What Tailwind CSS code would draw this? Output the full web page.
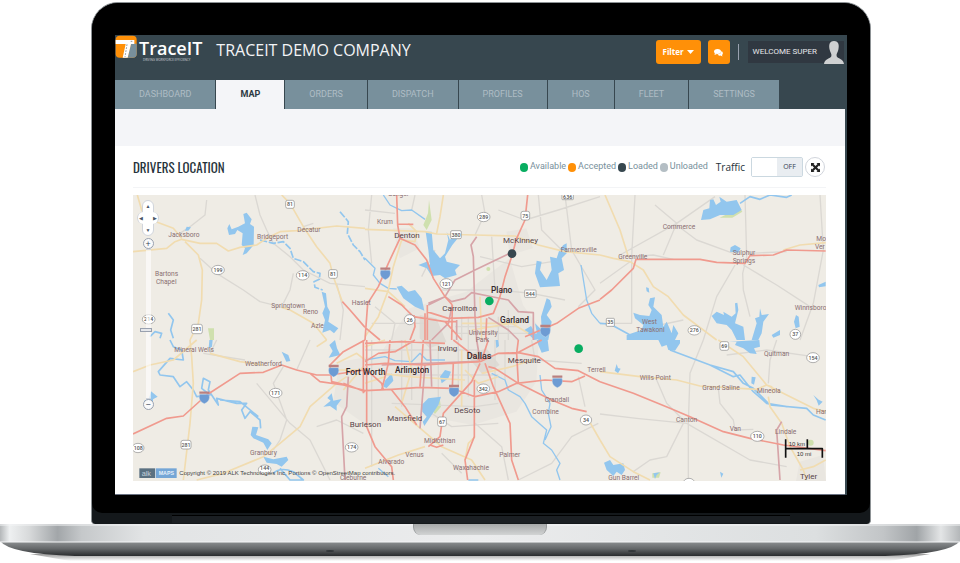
<!DOCTYPE html>
<html lang="en">
<head>
  <meta charset="UTF-8" />
  <meta name="viewport" content="width=device-width, initial-scale=1.0" />
  <title>TraceIT - Drivers Location</title>
  <script src="https://cdn.jsdelivr.net/npm/@tailwindcss/browser@4"></script>
</head>
<body class="bg-white overflow-x-hidden font-['Open_Sans',sans-serif]">

  <!-- Laptop lid -->
  <div class="pt-[2px] pl-[91px] pr-[89px]">
    <div class="bg-[#14181b] border border-b-0 border-[#8d9295] rounded-t-[27px] rounded-b-[4px]">
      <div class="bg-black rounded-t-[26px] rounded-b-[10px] pt-8 pl-[23px] pr-[23px] pb-[18px]">

        <!-- Screen -->
        <div class="bg-[#37474f]">
          <header class="flex items-start justify-between pb-[14px]">
            <div class="flex items-start">
              <a href="#" class="flex items-start text-white" aria-label="TraceIT home">
                <svg class="w-[22px] h-[23px]" viewBox="0 0 66 69">
                  <rect x="2" y="2" width="63" height="66" rx="12" fill="#ff9008" />
                  <path d="M48 26H65V56Q65 68 53 68H38z" fill="#78909c" />
                  <path d="M2 15H58V27H48L38 68H23L32 27H2z" fill="#fff" />
                  <path d="M36 28 L30 66 M47 19 h8" stroke="#59666d" stroke-width="2" stroke-dasharray="5 4" />
                </svg>
                <span class="flex flex-col ml-[2px]">
                  <span class="text-[18px] leading-[20px] pt-[3px] font-semibold">TraceIT</span>
                  <span class="text-[3px] leading-[4px] pl-1 text-gray-300">DRIVING WORKFORCE EFFICIENCY</span>
                </span>
              </a>
              <h1 class="ml-[14px] text-[16px] leading-[31px] text-gray-100 whitespace-nowrap">TRACEIT DEMO COMPANY</h1>
            </div>
            <div class="flex items-center mt-[5px] pr-[3px] h-6">
              <button class="flex items-center gap-[3px] h-6 px-[7px] rounded-[3px] bg-[#ff9008] text-white text-[8px] font-bold">Filter
                <svg class="w-[7px] h-1" viewBox="0 0 14 8"><path d="M0 0h14L7 8z" fill="#fff" /></svg>
              </button>
              <button class="flex items-center justify-center w-[22px] h-6 ml-[7px] rounded-[3px] bg-[#ff9008]" aria-label="Messages">
                <svg class="w-[9px] h-[9px]" viewBox="0 0 18 16" fill="#fff"><ellipse cx="7" cy="6" rx="7" ry="5" /><path d="M2 9l-1 4 5-2z" /><path d="M15 5q5 4 1 8l1 3-4-2q-4 1-6-2 7-1 8-7z" /></svg>
              </button>
              <span class="w-px h-4 ml-2 bg-gray-400"></span>
              <div class="flex items-center h-[22px] ml-[9px] pl-[5px] bg-[#303841] text-gray-200 text-[8px] font-['Roboto',sans-serif] whitespace-nowrap">WELCOME SUPER
                <svg class="w-5 h-[23px] ml-[7px]" viewBox="0 0 60 69" fill="#cfd1d2"><path d="M30 0C15 0 14 14 17 26C19 35 24 38 22 46C20 54 2 52 0 69H60C58 52 40 54 38 46C36 38 41 35 43 26C46 14 45 0 30 0z" /></svg>
              </div>
            </div>
          </header>

          <!-- Tabs -->
          <nav class="flex gap-px text-[9px] leading-[13px] text-[#afbdc5] font-['Roboto',sans-serif]">
            <a href="#" class="bg-[#78909c] px-6 py-2">DASHBOARD</a>
            <a href="#" class="bg-[#f4f5f8] px-6 py-2 text-[#2c3942] font-bold">MAP</a>
            <a href="#" class="bg-[#78909c] px-6 py-2">ORDERS</a>
            <a href="#" class="bg-[#78909c] px-6 py-2">DISPATCH</a>
            <a href="#" class="bg-[#78909c] px-6 py-2">PROFILES</a>
            <a href="#" class="bg-[#78909c] px-6 py-2">HOS</a>
            <a href="#" class="bg-[#78909c] px-6 py-2">FLEET</a>
            <a href="#" class="bg-[#78909c] px-6 py-2">SETTINGS</a>
          </nav>

          <main class="mr-[2px] bg-white border-b border-gray-500">
            <div class="h-[37px] bg-[#f4f5f8]"></div>
            <div class="pl-[18px] pr-[19px] pb-[13px]">
              <div class="flex items-center justify-between pt-[11px] pb-[10px] border-b border-gray-100">
                <h2 class="text-[13px] leading-[20px] text-[#26323a] font-['Oswald','Roboto_Condensed','Liberation_Sans_Narrow',sans-serif]">DRIVERS LOCATION</h2>
                <div class="flex items-center text-[9px] text-[#78909c]">
                  <ul class="flex items-center gap-[2px] font-['Roboto',sans-serif]">
                    <li class="flex items-center gap-[2px]"><i class="w-2 h-[9px] rounded-full bg-[#08ad61]"></i>Available</li>
                    <li class="flex items-center gap-[2px]"><i class="w-2 h-[9px] rounded-full bg-[#ff9008]"></i>Accepted</li>
                    <li class="flex items-center gap-[2px]"><i class="w-2 h-[9px] rounded-full bg-[#37474f]"></i>Loaded</li>
                    <li class="flex items-center gap-[2px]"><i class="w-2 h-[9px] rounded-full bg-[#b4bec4]"></i>Unloaded</li>
                  </ul>
                  <label for="traffic" class="ml-2 text-[10px] text-[#26323a]">Traffic</label>
                  <label class="relative flex w-[52px] h-5 ml-[6px] border border-[#cbd8e0] rounded-[2px]">
                    <input type="checkbox" id="traffic" class="peer absolute inset-0 opacity-0" />
                    <span class="w-1/2 bg-white"></span>
                    <span class="flex w-1/2 items-center justify-center bg-[#e9edf1] text-[7px] text-gray-700">OFF</span>
                  </label>
                  <button class="flex items-center justify-center w-5 h-5 ml-[2px] mr-px rounded-full border border-gray-300" aria-label="Full screen">
                    <svg class="w-[9px] h-[9px]" viewBox="0 0 18 18" fill="#222"><path d="M0 0h7L5 2l4 4 4-4-2-2h7v7l-2-2-4 4 4 4 2-2v7h-7l2-2-4-4-4 4 2 2H0v-7l2 2 4-4-4-4-2 2z" /></svg>
                  </button>
                </div>
              </div>

              <!-- Map -->
              <div class="relative mt-[7px]">
                <svg class="block w-full" viewBox="0 0 2079 858" fill="none" stroke-linejoin="round" font-family="Roboto, sans-serif">
                  <rect width="2079" height="858" fill="#efece5" />
                  <!-- built up areas -->
                  <g fill="#e9e6e0">
                    <path d="M830 340L1000 290 1130 190 1170 330 1220 400 1210 560 1150 650 1020 690 860 660 700 690 600 620 620 500 740 480z" />
                    <path d="M780 100h60l20 60-60 30zM1120 110l60-10 20 60-70 20zM2000 800l70-20 9 78h-90z" />
                  </g>
                  <g fill="#dedad4"><path d="M860 360l50 10 30 70-50 20-30-30zM1000 480l60-20 40 50-50 30z" /></g>
                  <g fill="#cfe0ae">
                    <path d="M888 15l8 60-15 30-10-15 14-35z" /><path d="M225 400h18v35h-12z" /><path d="M1760 68l60-30 8 12-30 18z" />
                    <circle cx="1066" cy="222" r="6" /><circle cx="2033" cy="743" r="9" /><path d="M1558 835l25-3-5 16h-20z" /><path d="M900 650l20-40 4 25-18 22z" />
                  </g>

                  <!-- minor roads -->
                  <g stroke="#dbd8d3" stroke-width="4">
                    <path transform="translate(-9 -15)" d="M375 15L390 75 410 120 430 160 480 200 520 240 600 280 705 290M230 30L225 75 180 110 150 130M210 205L260 250 340 300 390 335 450 350M490 250L480 300 460 340M620 280L640 360 630 450M550 100L520 110" />
                    <path transform="translate(696 -15)" d="M20 15L10 120 20 220M0 60L90 70M150 15L140 60M350 15L360 70 330 135M520 15L530 120 600 190M400 60L480 90 580 60 705 20M600 15L620 180 690 300 640 350M230 300L400 300 500 310 600 330M290 380V450M310 380V450M400 380V450M430 360V450M270 410H460M270 430H500M30 350L90 400 80 450M345 200L470 230 560 215M20 400H180M210 180L170 260M380 140L390 300" />
                    <path transform="translate(1401 -15)" d="M105 15L95 200V400L20 400M60 195L230 100 345 20M165 45L230 100 190 195M230 105L290 150 400 190M435 15L440 200 428 250 430 300 450 380M405 225L350 320 310 450M430 225L530 285 630 350M660 15L670 180 640 340 600 450M0 280L90 215M90 200L160 195 220 208M250 390L180 405M450 190L560 185" />
                    <path transform="translate(-9 435)" d="M220 40L345 60M380 130L480 250 540 300 600 420M460 80L430 130 470 240 450 300 430 330M260 0L240 40M540 0L500 90M560 260L620 240 700 280" />
                    <path transform="translate(696 435)" d="M20 0V380M110 0V200M140 0V180M220 0V180M280 0V170M310 0V170M390 0V180M420 0V120M0 30H340M60 105H400M80 190L330 200 400 190M200 220L260 260 400 250M230 340L290 400M330 250L410 320 430 420M460 420L560 370 620 290 700 250M500 0L510 60 650 70M640 110L660 200" />
                    <path transform="translate(1401 435)" d="M310 0L270 100 265 250V420M0 222L110 235 260 250 450 360 560 380M170 120L200 190 255 245M250 250L200 350 150 360 100 395M355 145L360 190 400 240 405 270 460 268M530 0L510 60 505 130M380 45L500 30 640 50" />
                  </g>

                  <!-- water -->
                  <g fill="#92c6ee">
                    <path transform="translate(-9 -15)" d="M340 72L350 68 365 88 360 102 372 110 371 165 350 190 338 195 345 175 335 165 338 130 322 120 315 132 297 135 292 115 298 102 305 118 325 110 345 100zM165 122l5-12 13 2-8 10zM575 305L588 310 592 350 600 365 595 395 625 415 612 430 600 420 577 428 585 390 577 370 585 350z" />
                    <path transform="translate(696 -15)" d="M182 125H200L205 180 225 205 240 190 250 150 245 125 255 150 272 123 282 140 262 165 240 200 245 215 285 225 270 240 275 255 240 265 225 255 200 258 185 235 160 225 185 215 195 225 190 180zM95 290L110 287 130 305 150 300 170 325 178 362 150 350 115 325zM595 165L605 160 605 190 590 205 597 240 580 250 585 288 525 292 510 250 515 212 530 215 525 240 545 270 560 240 555 200 575 205 583 180zM545 325L555 330 560 350 545 375 560 395 550 450 520 450 510 400 530 420 528 380zM478 420l20-12 15 25 10-20 15 30-30 7z" />
                    <path transform="translate(1401 -15)" d="M303 90L310 60 328 55 330 30 340 28 348 45 362 35 358 20 380 35 410 30 425 60 400 75 360 75 330 88zM390 185L392 172 405 165 422 175 415 188zM150 325L165 322 160 350 185 375 190 410 200 395 215 430 220 405 235 430 225 450H80L80 435 125 420 130 405 105 385 100 368 120 375 148 378 155 360 145 345zM335 378L350 365 372 375 370 365 395 380 407 370 405 340 412 338 415 360 405 400 430 410 435 450H410L395 420 380 405 350 400zM480 355L485 375 507 372 490 395 485 430 475 450H455L470 400 465 385 478 380zM588 375l8 5 3 30-12 5-5-20zM515 435l25-15v15l-20 8zM655 285l22-10v14l-20 3zM138 292l8 2 2 14-8-4z" />
                    <path transform="translate(-9 435)" d="M367 260L385 262 378 285 415 298 425 310 412 330 400 308 370 295 362 285zM400 350L430 358 470 350 475 360 455 380 440 372 410 368zM455 35l20 10 6 18-12 2zM598 15l17-15 6 25 10 20-35 8 12-20zM605 160l5 22 25-5-15 20v15l-20-14-20 2 22-18-10-8zM42 182l15-6 6-22 20 16-14 8 0 12-25 5zM238 0h10l-2 20-10 5z" />
                    <path transform="translate(696 435)" d="M60 122l20-22 5 22-20 22-10-4zM225 110L240 90 258 95 250 115 230 130zM170 195L190 175 228 170 220 195 200 225 178 258 173 245 185 230 172 215zM515 0H548L552 32 530 38 520 15zM392 0h8l2 18-8 6z" />
                    <path transform="translate(1401 435)" d="M175 0L185 20 200 15 205 30 225 32 240 10V0zM385 5L410 5 405 15 430 25 450 40 470 42 462 25 480 20 478 0zM455 110l12 2-5 22-8-4zM12 368L30 360 40 375 70 370 75 390 65 405 50 395 40 408 20 390zM50 72l4 12 8 2-8 14-10-8zM640 165l16 14 12 6-12 12-6-16zM360 395l10 6-6 12zM160 400l20-3-10 8-5 12z" />
                  </g>
                  <g stroke="#92c6ee" stroke-width="5">
                    <path transform="translate(-9 -15)" stroke-dasharray="22 5" d="M390 150L430 160 460 155 480 175 490 205 520 215 550 245 570 250 568 268 552 275 555 292 578 300M630 65L655 95 652 130 670 165 690 185 705 210" />
                    <path transform="translate(-9 -15)" d="M60 440L75 425 95 430 90 445M115 370L130 390 122 420 130 445" />
                    <path transform="translate(696 -15)" d="M0 205L30 235 25 255 45 280 70 295 95 297M55 15L75 45 110 62 140 60 180 88M648 225L665 330 680 370 705 400" stroke-width="4" />
                    <path transform="translate(1401 -15)" d="M420 40L450 20 480 28 510 15 560 22 575 15M0 400L30 402 100 440" />
                    <path transform="translate(-9 435)" d="M120 0L130 20 155 30 160 60 120 55 85 95 90 105 130 110 150 140 170 125 190 150 200 170 240 165 215 145 220 115 240 125 235 150 265 195 260 175 320 190 350 190 335 210 345 235 360 215 390 240 392 265M270 180L330 185 385 230M430 400Q450 380 490 395L520 420H480L450 385" />
                    <path transform="translate(696 435)" d="M380 100L420 120 430 150 465 170 480 190 500 230 545 270 535 310 560 330 585 370 575 390 585 420M525 105L530 150 555 190 550 220 558 260 540 300M0 60L60 50 90 62 140 65 165 40 185 60 240 60M40 385L70 410M310 420h30" stroke-width="4" />
                    <path transform="translate(1401 435)" d="M210 30L330 75 400 95 430 130 460 145 510 195 620 205 640 225 677 240M330 75L400 110 420 105 460 155 500 190 560 200" />
                  </g>

                  <!-- state roads -->
                  <g stroke="#f1dcb0" stroke-width="5">
                    <path transform="translate(-9 -15)" d="M22 15L35 60 50 85 130 115 155 145M9 185L110 175 135 155 155 148 210 160 260 160 295 183 330 172 380 165 410 145 450 125 500 122 620 108 705 115M165 155L205 195 217 240 215 330 205 400 180 450M455 15L480 40 520 110 560 170 600 220 610 260 637 335M455 352L480 360 550 400 590 450" />
                    <path transform="translate(696 -15)" d="M0 118L180 125 215 132 330 135 450 138 520 165 600 185 705 195M235 15L225 80 215 130M130 100L155 125 150 155 110 150M110 150L85 230 70 300 40 380 0 440M0 295L70 305 120 350M345 320L350 450M290 400H460M320 420L440 400 490 430" />
                    <path transform="translate(1401 -15)" d="M15 15L60 120 85 200M0 195L40 205 90 215 130 240 160 290 205 320 250 375 350 450M550 180L600 165 677 158" />
                    <path transform="translate(-9 435)" d="M9 95L60 75 130 60 200 0M180 0L185 50 190 130 180 250 160 420M240 40L330 65 400 75M650 110L620 130 540 200 510 260 450 310 400 350 280 400 200 420M590 0L560 20M620 70L680 40 705 60M610 90H705M640 150L700 80" />
                    <path transform="translate(696 435)" d="M0 385L100 345 180 320M90 200L160 260 230 320 320 360 360 420M50 100L130 110 300 120M300 90L340 130 400 110M290 30V200M120 0L140 90 110 190M350 100L440 80 500 60M665 230L705 300M0 20L60 0M0 130L60 110M300 360L310 310 330 290" />
                    <path transform="translate(1401 435)" d="M0 95L120 110 230 120 300 138 470 148 500 135 515 140 518 160M355 0L430 50 500 135 560 165 640 205 677 215M505 170L510 200 545 250 570 320 610 390 620 420M0 300L30 350 100 395 150 420M600 390L640 380 677 360" />
                  </g>

                  <!-- toll roads -->
                  <g stroke="#d6a4a8" stroke-width="5">
                    <path transform="translate(696 -15)" d="M335 140L318 165 325 200 330 380 335 450M430 192L330 240 270 270 240 320 190 345M190 340L240 320 260 335 300 325 320 308 370 318 430 330 460 365 505 368 505 450M262 345L250 400 200 450M275 390V450M370 382L430 420 460 450" />
                    <path transform="translate(-9 435)" d="M655 110L650 200 635 230 645 420" />
                    <path transform="translate(696 435)" d="M195 0L200 140M180 75L165 265M50 75L340 64M335 0L345 60" />
                    <path transform="translate(1401 435)" d="M545 245L530 270 540 420" />
                  </g>

                  <!-- highways -->
                  <g stroke="#f09a8e" stroke-width="5">
                    <path transform="translate(-9 -15)" d="M637 335L660 360 705 412" />
                    <path transform="translate(696 -15)" d="M95 15L98 105 105 145 70 220 40 290 8 340 0 450M98 102L145 103M105 145L150 165 185 210 205 265 240 320 262 345M488 15L480 90 455 145 440 200 420 260 405 320 385 370 340 382 250 385 185 365M70 320L110 345 145 380 240 395 275 395M147 375L150 410 135 450M365 385L362 450M187 345V450M180 370V450M262 345L260 450M240 395L290 450M0 412L45 450M705 330L640 355 575 400 480 440" />
                    <path transform="translate(1401 -15)" d="M0 328L35 300 100 235 108 208 300 208 350 217 435 220 450 197 520 195 560 180 677 183" />
                    <path transform="translate(-9 435)" d="M9 282L110 235 160 228 230 165 330 100 400 97 455 75 500 90 560 105 600 105 705 90M540 100L570 125 640 135 705 152M705 0L640 35 600 75 605 125 650 135M640 130L705 155M700 0V160" />
                    <path transform="translate(696 435)" d="M0 10L110 5 240 10M75 0L70 70 50 150M175 0L165 140M0 75L60 70 180 75 250 70 345 65M0 152L80 148 165 142 260 145 330 170 400 155 455 130 540 120 620 125 660 108M345 65L400 40 455 40 460 130M328 120V290L300 360 308 420M345 70L320 125 235 220 225 290 190 320M195 315L215 322 235 315M360 70L385 140 435 250 440 360 460 420M265 0L345 62M370 80L390 85 460 130 560 180 620 205 665 215M400 40L460 38 520 50 570 85 640 92 705 125M455 40L530 0M80 150L120 200 155 255M0 85L50 130 55 150M5 0V260L30 320 80 380 85 420M370 0L350 60M460 0L455 40M265 70L262 140M0 65L40 40 90 35 150 0" />
                    <path transform="translate(1401 435)" d="M0 125L100 160 210 205 270 230 370 275 450 295 550 315 677 332" />
                  </g>

                  <!-- town names -->
                  <g fill="#8a6f72" font-size="20">
                    <g transform="translate(-9 -15)">
                      <text x="115" y="140">Jacksboro</text><text x="381" y="147">Bridgeport</text><text x="502" y="126">Decatur</text>
                      <text x="75" y="257">Bartons</text><text x="78" y="281">Chapel</text><text x="424" y="353">Springtown</text>
                      <text x="519" y="371">Reno</text><text x="543" y="413">Azle</text><text x="665" y="345">Haslet</text>
                    </g>
                    <g transform="translate(696 -15)">
                      <text x="36" y="103">Krum</text><text x="70" y="19">Sanger</text><text x="587" y="187">Farmersville</text>
                      <text x="311" y="434">University</text><text x="332" y="457">Park</text>
                    </g>
                    <g transform="translate(1401 -15)">
                      <text x="188" y="117">Commerce</text><text x="55" y="207">Greenville</text><text x="398" y="195">Sulphur</text><text x="398" y="220">Springs</text>
                      <text x="649" y="153">Mo</text><text x="645" y="177">Ver</text><text x="584" y="361">Winnsboro</text><text x="126" y="402">West</text><text x="109" y="427">Tawakoni</text>
                    </g>
                    <g transform="translate(-9 435)">
                      <text x="133" y="36">Mineral Wells</text><text x="345" y="77">Weatherford</text><text x="360" y="344">Granbury</text><text x="630" y="421">Cleburne</text>
                    </g>
                    <g transform="translate(696 435)">
                      <text x="539" y="187">Crandall</text><text x="502" y="221">Combine</text><text x="177" y="309">Midlothian</text><text x="121" y="350">Venus</text>
                      <text x="40" y="373">Alvarado</text><text x="403" y="352">Palmer</text><text x="264" y="389">Waxahachie</text><text x="667" y="97">Terrell</text>
                    </g>
                    <g transform="translate(1401 435)">
                      <text x="119" y="119">Wills Point</text><text x="307" y="150">Grand Saline</text><text x="492" y="47">Quitman</text><text x="471" y="158">Mineola</text>
                      <text x="228" y="247">Canton</text><text x="389" y="274">Van</text><text x="525" y="281">Lindale</text><text x="648" y="221">Har</text><text x="25" y="420">Gun Barrel</text>
                    </g>
                  </g>
                  <g fill="#574448" font-size="24">
                    <g transform="translate(696 -15)"><text x="88" y="143">Denton</text><text x="414" y="158">McKinney</text><text x="232" y="363">Carrollton</text></g>
                    <g transform="translate(696 435)"><text x="218" y="32">Irving</text><text x="428" y="70">Mesquite</text><text x="268" y="220">DeSoto</text><text x="67" y="242">Mansfield</text><text x="-46" y="260">Burleson</text></g>
                    <text x="2001" y="852">Tyler</text>
                  </g>
                  <g fill="#33282b" font-size="25" font-weight="500">
                    <text x="1074" y="293">Plano</text><text x="1101" y="383">Garland</text>
                    <text x="1001" y="491" font-size="27">Dallas</text><text x="786" y="533">Arlington</text><text x="638" y="541">Fort Worth</text>
                  </g>

                  <!-- route shields -->
                  <g fill="#fff" stroke="#8b8b8b" stroke-width="2">
                    <rect x="458" y="16" width="26" height="24" rx="6" /><rect x="587" y="224" width="26" height="26" rx="6" /><rect x="176" y="388" width="32" height="28" rx="6" />
                    <rect x="953" y="107" width="32" height="24" rx="4" /><rect x="1164" y="49" width="26" height="26" rx="6" /><rect x="1175" y="285" width="34" height="22" rx="2" />
                    <rect x="1287" y="-8" width="34" height="22" rx="2" /><rect x="1420" y="370" width="24" height="24" rx="2" /><rect x="144" y="736" width="30" height="26" rx="6" />
                    <rect x="914" y="666" width="26" height="28" rx="6" /><rect x="1761" y="440" width="26" height="26" rx="6" />
                    <ellipse cx="255" cy="225" rx="19" ry="14" /><ellipse cx="509" cy="241" rx="19" ry="14" /><ellipse cx="47" cy="373" rx="19" ry="14" />
                    <ellipse cx="1052" cy="66" rx="19" ry="14" /><ellipse cx="940" cy="266" rx="19" ry="15" /><ellipse cx="830" cy="374" rx="16" ry="15" />
                    <ellipse cx="1684" cy="406" rx="19" ry="14" /><ellipse cx="1987" cy="418" rx="16" ry="15" /><ellipse cx="428" cy="594" rx="19" ry="14" />
                    <ellipse cx="15" cy="759" rx="18" ry="14" /><ellipse cx="656" cy="757" rx="19" ry="14" /><ellipse cx="395" cy="824" rx="19" ry="14" />
                    <ellipse cx="1051" cy="581" rx="19" ry="14" /><ellipse cx="1359" cy="675" rx="17" ry="15" /><ellipse cx="2040" cy="488" rx="19" ry="15" />
                    <ellipse cx="1873" cy="724" rx="20" ry="15" /><ellipse cx="1668" cy="862" rx="16" ry="12" />
                  </g>
                  <g fill="#555" font-size="16" font-weight="500" text-anchor="middle">
                    <text x="471" y="34">81</text><text x="600" y="243">81</text><text x="192" y="408">281</text><text x="969" y="125">380</text><text x="1177" y="68">75</text>
                    <text x="1192" y="302">544</text><text x="1304" y="11">636</text><text x="1432" y="388">35</text><text x="159" y="755">281</text><text x="927" y="686">67</text><text x="1774" y="459">69</text>
                    <text x="255" y="231">199</text><text x="509" y="247">114</text><text x="47" y="379">214</text><text x="1052" y="72">289</text><text x="940" y="272">121</text><text x="830" y="380">26</text>
                    <text x="1684" y="412">276</text><text x="1987" y="424">37</text><text x="428" y="600">171</text><text x="16" y="765">108</text><text x="656" y="763">174</text><text x="395" y="826">144</text>
                    <text x="1051" y="587">342</text><text x="1359" y="681">34</text><text x="2040" y="494">154</text><text x="1873" y="730">110</text>
                  </g>
                  <!-- interstates -->
                  <g fill="#6d9bd3" stroke="#dfe6ee" stroke-width="1">
                    <path d="M743 226h28q6 20-14 28-20-8-14-28zM1223 398h28q6 20-14 28-20-8-14-28zM200 598h28q6 20-14 28-20-8-14-28zM588 518h28q6 20-14 28-20-8-14-28zM949 578h28q6 20-14 28-20-8-14-28zM1259 550h28q6 20-14 28-20-8-14-28z" />
                  </g>
                  <path d="M742 221h30M1222 393h30M199 593h30M587 513h30M948 573h30M1258 545h30" stroke="#b98080" stroke-width="7" />

                  <!-- drivers -->
                  <circle cx="1137" cy="176" r="13" fill="#37474f" />
                  <circle cx="1069" cy="318" r="13" fill="#08ad61" />
                  <circle cx="1337" cy="461" r="13" fill="#08ad61" />

                  <!-- scale -->
                  <path d="M1958 733V788M1958 761H2068V788M2023 733V761" stroke="#111" stroke-width="5" />
                  <g fill="#333" font-size="18" font-family="Liberation Sans, sans-serif">
                    <text x="1967" y="753">10 km</text><text x="1991" y="782">10 mi</text>
                  </g>

                  <!-- copyright -->
                  <rect x="19" y="820" width="47" height="29" fill="#5b7181" /><rect x="68" y="820" width="63" height="29" fill="#75a6d6" />
                  <g font-family="Liberation Sans, sans-serif">
                    <text x="26" y="842" fill="#c3d0da" font-size="22">alk</text><text x="77" y="841" fill="#e6f0fa" font-size="16" font-weight="700">MAPS</text>
                    <text x="139" y="841" fill="#444" font-size="18">Copyright © 2019 ALK Technologies Inc, Portions © OpenStreetMap contributors.</text>
                  </g>
                </svg>

                <!-- Pan and zoom -->
                <div class="absolute left-1 top-[5px] flex flex-col items-center w-[22px]">
                  <div class="relative grid grid-cols-[5px_12px_5px] grid-rows-[12px_12px_12px] text-[5px] leading-none text-gray-600">
                    <span class="absolute left-[5px] top-0 w-3 h-9 rounded-full bg-white border border-gray-300"></span>
                    <span class="absolute left-0 top-3 w-[22px] h-3 rounded-full bg-white border-x border-gray-300"></span>
                    <button class="relative col-start-2 row-start-1" aria-label="Pan up">▲</button>
                    <button class="relative col-start-1 row-start-2 pl-[2px]" aria-label="Pan left">◀</button>
                    <button class="relative col-start-3 row-start-2 -ml-1" aria-label="Pan right">▶</button>
                    <button class="relative col-start-2 row-start-3" aria-label="Pan down">▼</button>
                  </div>
                  <button class="flex items-center justify-center w-[11px] h-[11px] mt-[2px] rounded-full bg-gray-50 border border-gray-400 text-[9px] leading-none text-gray-700" aria-label="Zoom in">+</button>
                  <input type="range" min="0" max="100" value="54" aria-label="Zoom level" class="appearance-none [writing-mode:vertical-lr] w-[5px] h-[150px] bg-white/60 border-x border-gray-300 [&::-webkit-slider-thumb]:appearance-none [&::-webkit-slider-thumb]:w-3 [&::-webkit-slider-thumb]:h-1 [&::-webkit-slider-thumb]:-ml-1 [&::-webkit-slider-thumb]:bg-gray-200 [&::-webkit-slider-thumb]:border [&::-webkit-slider-thumb]:border-gray-400" />
                  <button class="flex items-center justify-center w-[11px] h-[11px] rounded-full bg-gray-50 border border-gray-400 text-[9px] leading-none text-gray-700" aria-label="Zoom out">−</button>
                </div>
              </div>
            </div>
          </main>
        </div>
      </div>

      <!-- Hinge -->
      <div class="h-[11px] pt-[2px] px-20"><div class="h-2 bg-[#1b1f23] border-t border-black"></div></div>
    </div>
  </div>

  <!-- Laptop base -->
  <div class="relative">
    <svg class="block w-full h-[38px]" viewBox="0 0 960 38" preserveAspectRatio="none">
      <defs>
        <linearGradient id="deck">
          <stop offset="0" stop-color="#b4b7b9" /><stop offset=".01" stop-color="#eef0f1" /><stop offset=".03" stop-color="#d8dadb" /><stop offset=".06" stop-color="#a2a6a9" /><stop offset=".085" stop-color="#c5c8ca" /><stop offset=".15" stop-color="#e2e4e5" />
          <stop offset=".5" stop-color="#ebeced" /><stop offset=".85" stop-color="#dcdfe0" /><stop offset=".92" stop-color="#c2c5c7" /><stop offset=".955" stop-color="#a0a4a7" /><stop offset=".98" stop-color="#e3e5e6" /><stop offset="1" stop-color="#b4b7b9" />
        </linearGradient>
        <linearGradient id="under" x2="0" y2="1"><stop offset="0" stop-color="#909395" /><stop offset=".5" stop-color="#66696b" /><stop offset="1" stop-color="#292b2d" /></linearGradient>
        <linearGradient id="shadow" x2="0" y2="1"><stop offset="0" stop-color="#999" /><stop offset="1" stop-color="#fff" /></linearGradient>
      </defs>
      <path d="M30 30H930L890 37H70z" fill="url(#shadow)" />
      <path d="M0 17H960Q950 30 885 32H75Q10 30 0 17z" fill="url(#under)" />
      <path d="M0 0H960V18H0z" fill="url(#deck)" />
      <path d="M0 1H960M0 18H960" stroke="#f4f5f6" />
      <ellipse cx="330" cy="27" rx="4" ry="1" fill="#33373a" /><ellipse cx="632" cy="27" rx="4" ry="1" fill="#33373a" />
    </svg>
    <div class="absolute top-0 left-[43%] w-[14%] h-[11px] rounded-b-[8px] bg-linear-to-b from-[#a7a9aa] to-[#d2d4d4] border-x border-[#96999a]"></div>
  </div>

</body>
</html>
